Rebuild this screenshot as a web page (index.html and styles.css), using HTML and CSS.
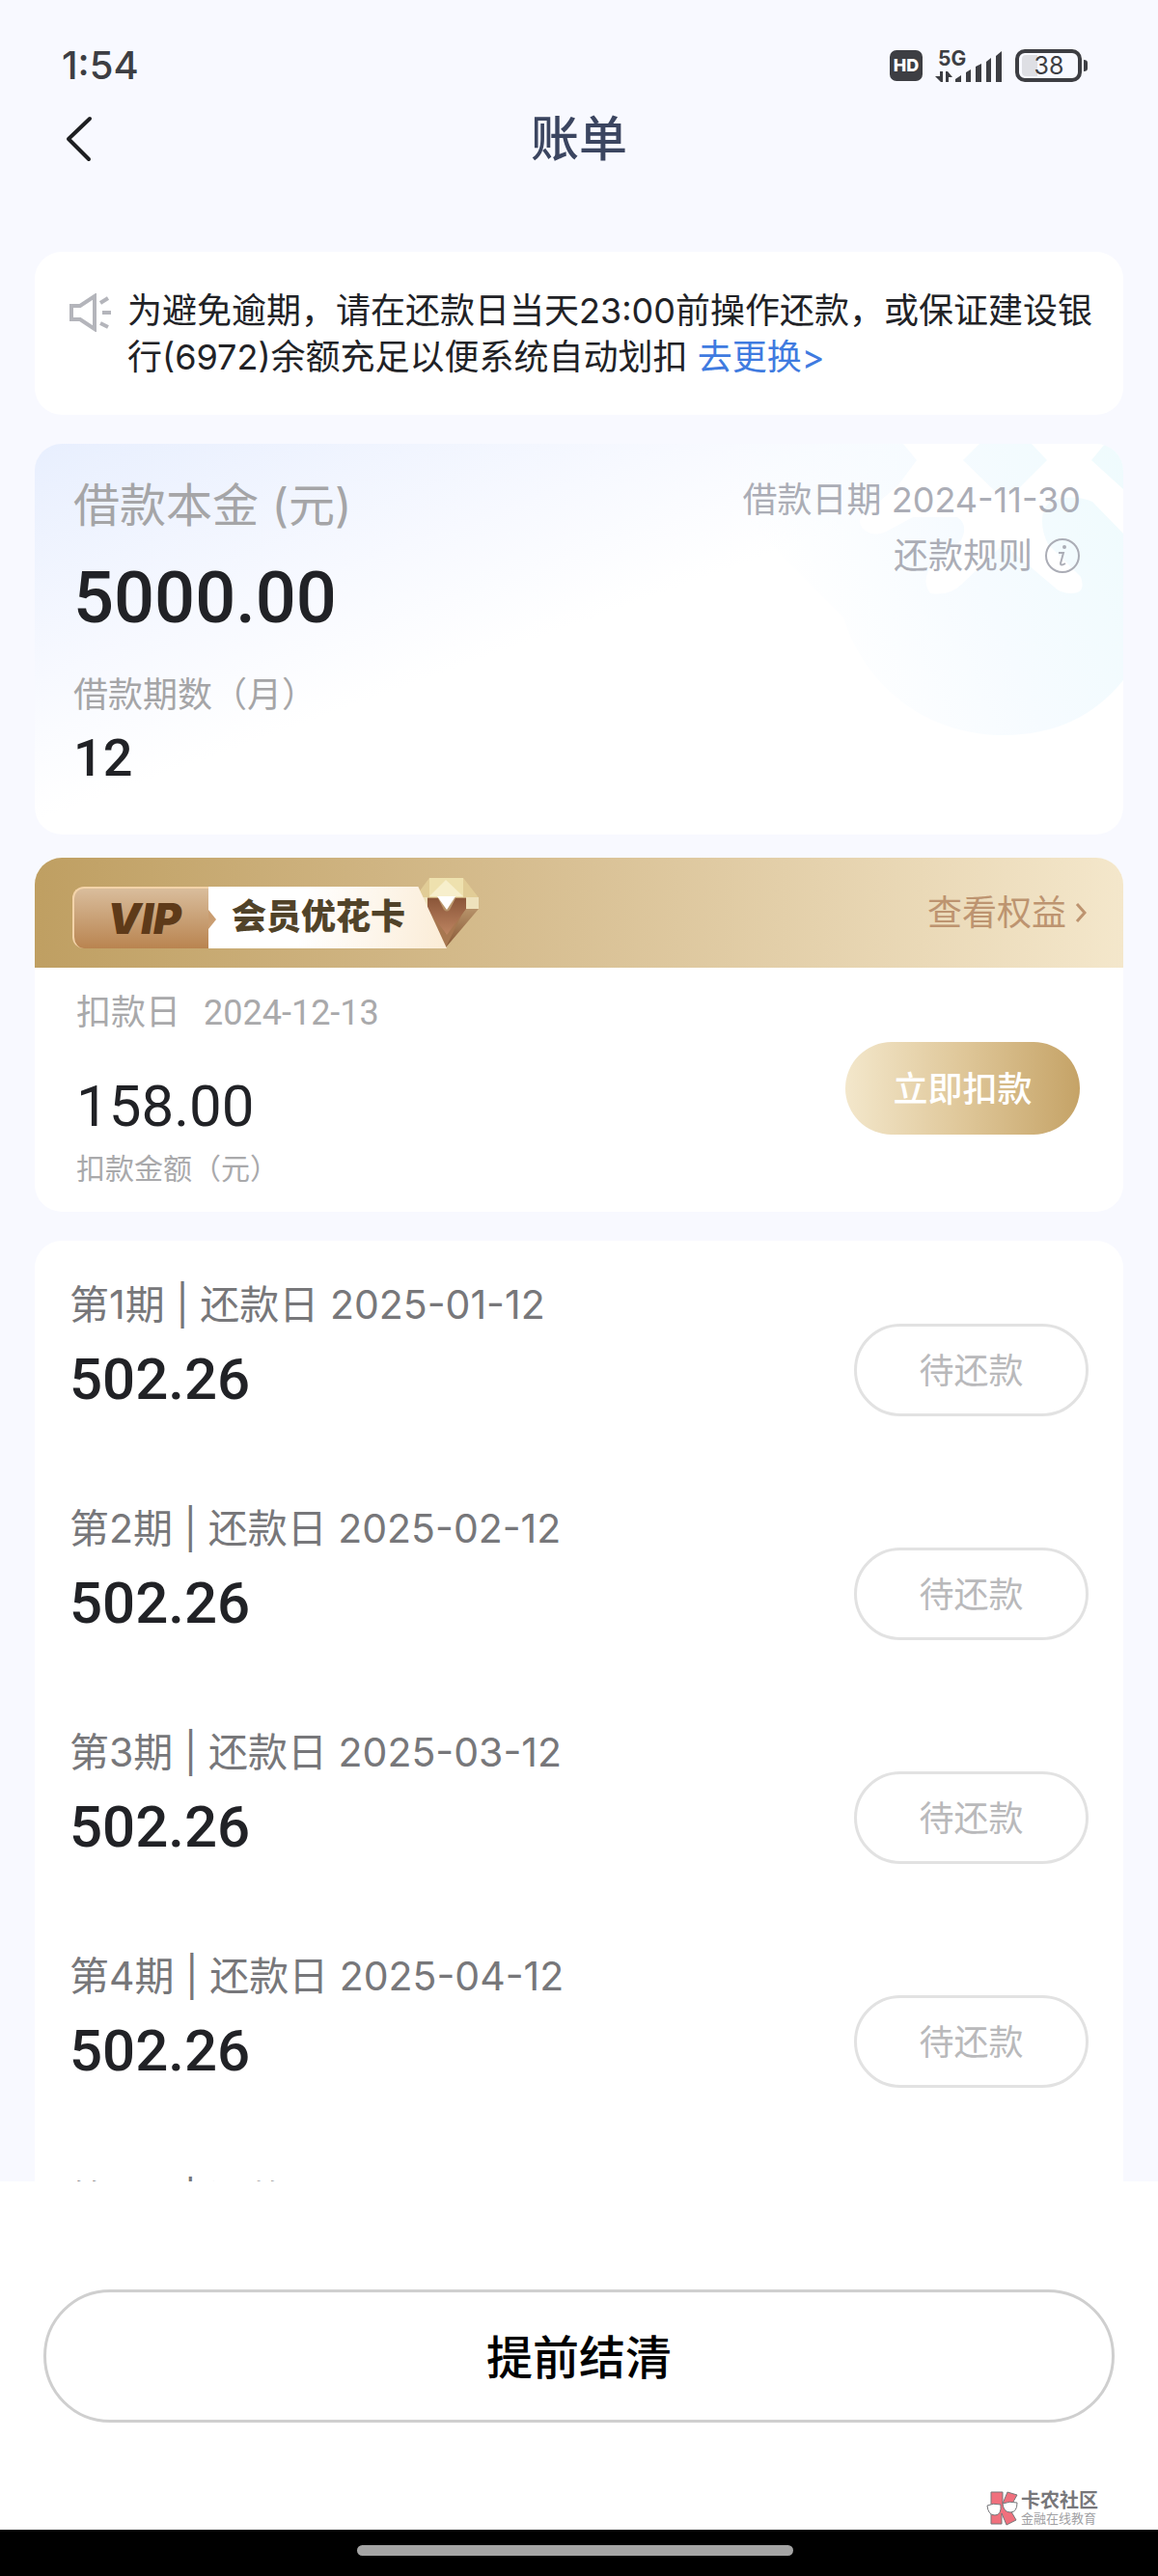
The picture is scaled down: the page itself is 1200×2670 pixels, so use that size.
FILE: index.html
```html
<!DOCTYPE html>
<html lang="zh-CN">
<head>
    <meta charset="UTF-8">
    <meta name="viewport" content="width=device-width, initial-scale=1.0">
    <title>账单</title>
    <link rel="stylesheet" href="styles.css">
</head>
<body>
    <div class="status-bar">
        <span class="status-time">1:54</span>
        <div class="status-icons">
            <span class="hd-badge">HD</span>
            <svg class="signal" width="70" height="36" viewBox="0 0 70 36" fill="#3d3e43">
                <text class="signal-text" x="3" y="18">5G</text>
                <path d="M5 24h3v11H6l-6-6h5zM11 35V24h2l5 6h-4v5z"/>
                <path d="M21 35v-3l6-4v7zM32 35V25l5-3v13zM42 35V19l6-3v19zM53 35V14l5-4v25zM63 35V8l6-5v32z"/>
            </svg>
            <svg class="battery" width="76" height="34" viewBox="0 0 76 34">
                <rect x="2" y="2" width="65" height="30" rx="8" fill="none" stroke="#3d3e43" stroke-width="4"/>
                <path d="M11 6h12v22H11q-4 0-4-4V10q0-4 4-4z" fill="#dedfe4"/>
                <path d="M71 11q4 0 4 3v6q0 3-4 3z" fill="#3d3e43"/>
                <text class="battery-text" x="35" y="26">38</text>
            </svg>
        </div>
    </div>

    <header class="nav-header">
        <button class="back-button" type="button" aria-label="返回">
            <svg width="28" height="48" viewBox="0 0 28 48" fill="none" stroke="#1e1f22" stroke-width="4" stroke-linecap="round" stroke-linejoin="round">
                <path d="M25 3L3 24l21 21"/>
            </svg>
        </button>
        <h1 class="nav-title">账单</h1>
    </header>

    <main class="content">
        <section class="card notice">
            <svg class="notice-icon" width="44" height="40" viewBox="0 0 44 40" fill="none" stroke="#b4b5bb" stroke-width="4">
                <path d="M2 13h9L26 3v34L11 27H2z"/>
                <path d="M32 10l8-5M34 20h9M32 31l8 4"/>
            </svg>
            <p class="notice-text">为避免逾期，请在还款日当天23:00前操作还款，或保证建设银行(6972)余额充足以便系统自动划扣 <a href="#">去更换&gt;</a></p>
        </section>

        <section class="card loan">
            <svg class="loan-deco" width="430" height="310" viewBox="0 0 430 310">
                <defs>
                    <linearGradient id="deco" x1="0" y1="0.3" x2="1" y2="0">
                        <stop offset="0.1" stop-color="#f6fbff" stop-opacity="0"/>
                        <stop offset="0.55" stop-color="#f6fbff"/>
                        <stop offset="1" stop-color="#effbfd"/>
                    </linearGradient>
                </defs>
                <path d="M0 0h430v245q-46 57-124 57C220 302 160 245 140 180L0 40z" fill="url(#deco)"/>
                <path d="M202 0h79l-17 17 32 31h24l31-31-16-17h76l-14 17 33 30v46l-32-33q-18-8-40-2-12 6-12 22 0 12 6 24l34 34q6 17-10 17-12 0-18-7l-52-44-44 42q-12 12-32 9-8-11-2-23l34-32q8-16-4-24h-46l-26 14q-14 8-26-2-6-8 0-14l36-30 20-27z" fill="#fff"/>
            </svg>
            <div class="loan-main">
                <div class="loan-label">借款本金 (元)</div>
                <div class="loan-amount">5000.00</div>
                <div class="loan-sub">借款期数（月）</div>
                <div class="loan-periods">12</div>
            </div>
            <div class="loan-side">
                <div>借款日期 2024-11-30</div>
                <a class="rule-link" href="#">还款规则
                    <svg width="38" height="38" viewBox="0 0 38 38" fill="none" stroke="#abadb6" stroke-width="2">
                        <circle cx="19" cy="19" r="17"/>
                        <circle cx="21" cy="10" r="1" fill="#abadb6"/>
                        <path d="M15 16h5l-3 11q0 3 5 0"/>
                    </svg>
                </a>
            </div>
        </section>

        <section class="card vip">
            <div class="vip-header">
                <div class="vip-badge">
                    <span class="vip-mark">VIP</span>
                    <span class="vip-name">会员优花卡</span>
                    <svg class="vip-gem" width="68" height="74" viewBox="0 0 68 74">
                        <defs>
                            <linearGradient id="gem" x1="0" y1="0" x2="0" y2="1">
                                <stop offset="0" stop-color="#dcc193"/>
                                <stop offset="1" stop-color="#875735"/>
                            </linearGradient>
                            <linearGradient id="gem-v" x1="0" y1="0" x2="0" y2="1">
                                <stop offset="0" stop-color="#8b5639"/>
                                <stop offset="1" stop-color="#bd8461"/>
                            </linearGradient>
                        </defs>
                        <path d="M16 1h35l16 20v12L33 73 1 33V21z" fill="url(#gem)"/>
                        <path d="M16 1h35l16 20H1z" fill="#e1cc96"/>
                        <path d="M16 1h35v20H16z" fill="#eee1ae"/>
                        <path d="M1 21h13v12H1zM54 21h13v12H54z" fill="#eee2bc"/>
                        <path d="M16 20l17-17 18 17z" fill="#f7efcc"/>
                        <path d="M33 73L14 32l19 27 20-27z" fill="#a77750"/>
                        <path d="M24 20h19l-9 14z" fill="#fff"/>
                        <path d="M14 22h11l6 12q3 3 6 0l6-12h11v11L34 60 14 33z" fill="url(#gem-v)"/>
                    </svg>
                </div>
                <a class="vip-link" href="#">查看权益
                    <svg width="12" height="22" viewBox="0 0 12 22" fill="none" stroke="#bd9470" stroke-width="3">
                        <path d="M2 2l8 9-8 9"/>
                    </svg>
                </a>
            </div>
            <div class="vip-body">
                <div>
                    <div class="vip-date"><span>扣款日</span><span>2024-12-13</span></div>
                    <div class="vip-amount">158.00</div>
                    <div class="vip-caption">扣款金额（元）</div>
                </div>
                <button class="pill pay-button" type="button">立即扣款</button>
            </div>
        </section>

        <section class="card plan">
            <div class="plan-row">
                <div>
                    <div class="plan-title">第1期 | 还款日 2025-01-12</div>
                    <div class="plan-amount">502.26</div>
                </div>
                <button class="pill wait-button" type="button">待还款</button>
            </div>
            <div class="plan-row">
                <div>
                    <div class="plan-title">第2期 | 还款日 2025-02-12</div>
                    <div class="plan-amount">502.26</div>
                </div>
                <button class="pill wait-button" type="button">待还款</button>
            </div>
            <div class="plan-row">
                <div>
                    <div class="plan-title">第3期 | 还款日 2025-03-12</div>
                    <div class="plan-amount">502.26</div>
                </div>
                <button class="pill wait-button" type="button">待还款</button>
            </div>
            <div class="plan-row">
                <div>
                    <div class="plan-title">第4期 | 还款日 2025-04-12</div>
                    <div class="plan-amount">502.26</div>
                </div>
                <button class="pill wait-button" type="button">待还款</button>
            </div>
            <div class="plan-row">
                <div>
                    <div class="plan-title">第5期 | 还款日 2025-05-12</div>
                </div>
            </div>
        </section>
    </main>

    <footer class="footer">
        <button class="settle-button" type="button">提前结清</button>
        <div class="brand">
            <svg width="36" height="36" viewBox="0 0 36 36" stroke="#77777a" stroke-width="1">
                <path d="M6 1h12v12l5-12 10 3-8 14 7 12-10 5-5-12v11H6z" fill="#f0707d"/>
                <path d="M2 15q6-3 14-1 1 11-6 11-7 0-8-10zM18 13q7-3 15-1 0 10-7 10t-8-9z" fill="#fff"/>
            </svg>
            <div>
                <div class="brand-name">卡农社区</div>
                <div class="brand-slogan">金融在线教育</div>
            </div>
        </div>
    </footer>
    <div class="home-bar"><span class="home-indicator"></span></div>
</body>
</html>
```
FILE: styles.css
```css
* {
    box-sizing: border-box;
}

body {
    margin: 0;
    height: 100vh;
    display: flex;
    flex-direction: column;
    background-color: #f8f9ff;
    color: #212226;
    font-family: Inter, "Noto Sans CJK SC", sans-serif;
    font-size: 36px;
    line-height: 48px;
}

button {
    padding: 0 0 4px;
    font-family: inherit;
    cursor: pointer;
}

a {
    color: inherit;
    text-decoration: none;
}

/* Status bar */
.status-bar {
    display: flex;
    justify-content: space-between;
    align-items: center;
    padding: 44px 72px 0 64px;
}

.status-time {
    font-size: 40px;
    font-weight: 500;
    color: #3d3e43;
}

.status-icons {
    display: flex;
    align-items: center;
    gap: 13px;
}

.hd-badge {
    width: 34px;
    border-radius: 7px;
    background-color: #3d3e43;
    color: #fff;
    font-size: 18px;
    font-weight: 800;
    line-height: 32px;
    text-align: center;
}

.signal {
    overflow: visible;
}

.signal-text {
    font-size: 21px;
    font-weight: 700;
}

.battery-text {
    font-size: 25px;
    text-anchor: middle;
    fill: #3d3e43;
}

/* Title bar */
.nav-header {
    display: grid;
    grid-template-columns: 1fr auto 1fr;
    align-items: center;
    height: 104px;
    margin-bottom: 65px;
    padding: 0 68px;
}

.back-button {
    display: flex;
    justify-self: start;
    padding: 0;
    border: none;
    background: none;
}

.nav-title {
    margin: 0;
    font-size: 50px;
    font-weight: 500;
    color: #3b4560;
}

/* Cards */
.content {
    flex: 1;
    min-height: 0;
    overflow: hidden;
    padding: 0 36px;
}

.card {
    position: relative;
    overflow: hidden;
    margin-bottom: 30px;
    border-radius: 28px;
    background-color: #fff;
}

.notice {
    display: flex;
    gap: 16px;
    padding: 37px 32px 36px 36px;
}

.notice-icon {
    flex: none;
    margin-top: 6px;
}

.notice-text {
    flex: 1;
    margin: 0;
}

.notice-text a {
    color: #3f7be0;
}

.loan {
    display: flex;
    justify-content: space-between;
    margin-bottom: 24px;
    padding: 34px 44px 49px 40px;
    background-image: linear-gradient(160deg, #e8effe 0%, #f7f9ff 30%, #fff 48%);
}

.loan-deco {
    position: absolute;
    top: 0;
    right: 0;
}

.loan-main,
.loan-side {
    position: relative;
}

.loan-label {
    font-size: 48px;
    line-height: 60px;
    color: #a5a5a7;
}

.loan-amount,
.loan-periods,
.vip-amount,
.plan-amount {
    font-family: Roboto, sans-serif;
    font-weight: 500;
}

.loan-amount {
    margin: 24px 0 34px;
    font-size: 74px;
    line-height: 84px;
}

.loan-sub {
    color: #a5a5a7;
}

.loan-periods {
    margin-top: 12px;
    font-size: 54px;
    line-height: 60px;
}

.loan-side {
    display: flex;
    flex-direction: column;
    align-items: flex-end;
    gap: 10px;
    color: #abadb6;
}

.rule-link {
    display: flex;
    align-items: center;
    gap: 12px;
}

/* VIP card */
.vip-header {
    display: flex;
    justify-content: space-between;
    align-items: center;
    height: 114px;
    padding: 0 38px 0 39px;
    background-image: linear-gradient(90deg, #bf9f62, #d9c195 50%, #f4e7cb);
}

.vip-badge {
    display: flex;
    align-items: flex-end;
}

.vip-mark {
    position: relative;
    width: 141px;
    height: 64px;
    padding-left: 6px;
    border: 2px solid #f3d3a9;
    border-width: 2px 0 0 2px;
    border-radius: 12px 0 0 12px;
    background-image: linear-gradient(180deg, #d9bd9c, #b98450);
    color: #5e3a19;
    font-size: 44px;
    font-style: italic;
    font-weight: 900;
    line-height: 62px;
    text-align: center;
}

.vip-mark::after {
    content: "";
    position: absolute;
    z-index: 1;
    top: 22px;
    left: 100%;
    border: solid transparent;
    border-width: 10px 0 10px 8px;
    border-left-color: #c99d71;
}

.vip-name {
    height: 64px;
    padding: 0 43px 0 24px;
    background-image: linear-gradient(100deg, #fff 40%, #fbecd6);
    clip-path: polygon(0 0, 88% 0, 100% 100%, 0 100%);
    color: #514329;
    font-weight: 900;
    line-height: 62px;
}

.vip-gem {
    margin-left: -34px;
}

.vip-link {
    display: flex;
    align-items: center;
    gap: 9px;
    color: #bd9470;
}

.vip-body {
    display: flex;
    justify-content: space-between;
    align-items: center;
    padding: 23px 45px 27px 43px;
    color: #a9a9ab;
}

.vip-date {
    display: flex;
    gap: 24px;
    font-family: Roboto, "Noto Sans CJK SC", sans-serif;
}

.vip-amount {
    margin: 37px 0 10px;
    color: #212226;
    font-size: 60px;
    font-weight: 400;
    line-height: 72px;
}

.vip-caption {
    font-size: 30px;
    line-height: 36px;
}

.pill {
    width: 243px;
    height: 96px;
    border-radius: 48px;
    font-size: 36px;
}

.pay-button {
    border: none;
    background-image: linear-gradient(90deg, #f3e7cb, #dfc799 50%, #c5a367);
    color: #fff;
    font-weight: 500;
}

/* Repayment plan */
.plan {
    padding: 42px 36px 0;
}

.plan-row {
    display: flex;
    justify-content: space-between;
    align-items: flex-end;
    margin-bottom: 92px;
}

.plan-title {
    margin-bottom: 16px;
    font-size: 41px;
    color: #77777a;
}

.plan-amount {
    font-size: 60px;
    line-height: 76px;
}

.wait-button {
    border: 3px solid #e2e2e2;
    background-color: #fff;
    color: #b9b9bb;
}

/* Footer */
.footer {
    padding: 112px 45px 4px;
    background-color: #fff;
}

.settle-button {
    display: block;
    width: 100%;
    height: 138px;
    border: 3px solid #cfcfcf;
    border-radius: 69px;
    background-color: #fff;
    color: #000;
    font-size: 48px;
    font-weight: 500;
}

.brand {
    display: flex;
    justify-content: flex-end;
    align-items: center;
    gap: 1px;
    margin-top: 71px;
    padding-right: 17px;
}

.brand-name {
    color: #77777a;
    font-size: 20px;
    font-weight: 700;
    line-height: 20px;
}

.brand-slogan {
    color: #a0a0a3;
    font-size: 13px;
    line-height: 16px;
}

.home-bar {
    display: flex;
    justify-content: center;
    align-items: center;
    height: 48px;
    padding: 0 8px 6px 0;
    background-color: #000;
}

.home-indicator {
    width: 38%;
    height: 11px;
    border-radius: 6px;
    background-color: #a4a4a4;
}
```
